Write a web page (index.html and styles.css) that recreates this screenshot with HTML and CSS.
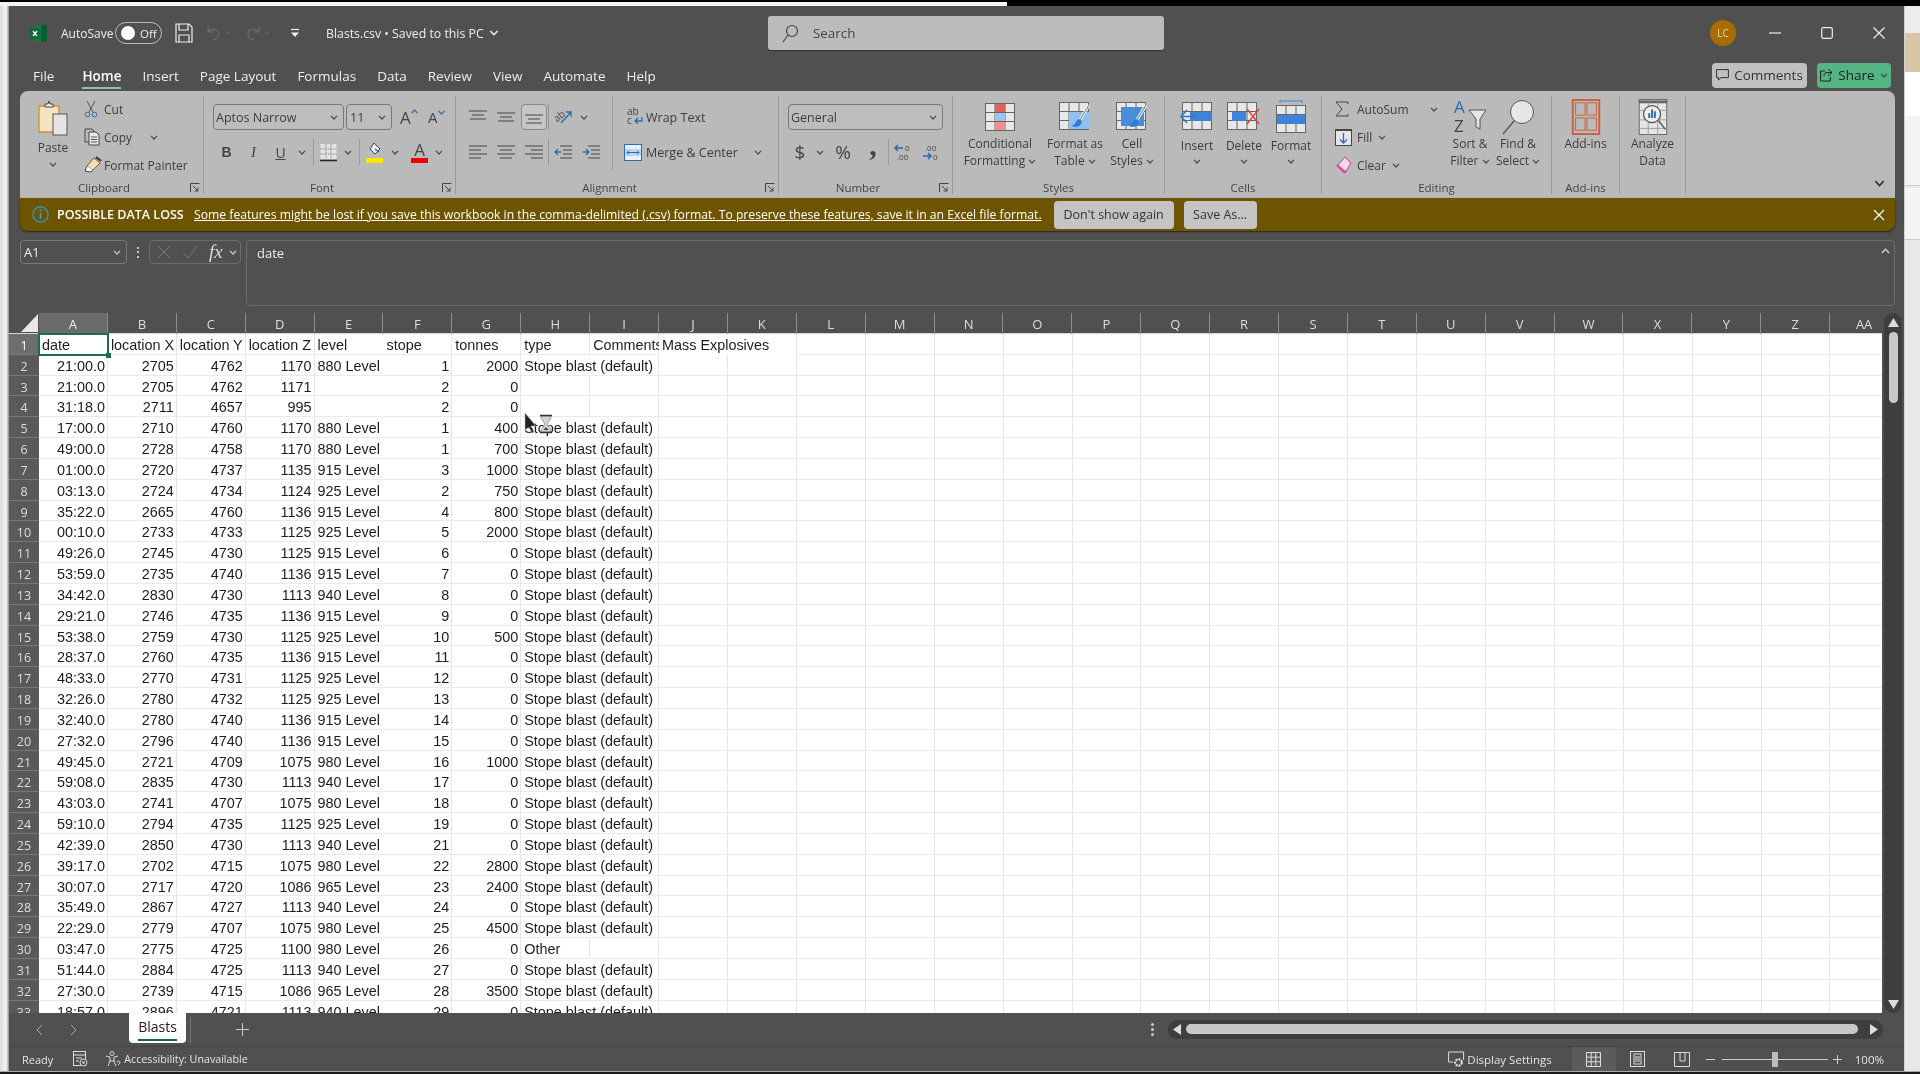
FILE: index.html
```html
<!DOCTYPE html>
<html lang="en">
<head>
<meta charset="utf-8">
<title>Blasts.csv - Excel</title>
<link rel="stylesheet" href="styles.css">
</head>
<body>
<svg class="defs" aria-hidden="true">
  <symbol id="chev" viewBox="0 0 8 5"><path d="M1 .8 4 4 7 .8" fill="none" stroke="currentColor" stroke-width="1.2"/></symbol>
  <symbol id="launch" viewBox="0 0 10 10"><path d="M.5 9V.5H9.5M3 3l5 5M8 4.500V8H4.500" fill="none" stroke="#444" stroke-width="1"/></symbol>
  <symbol id="grid" viewBox="0 0 30 28"><rect x=".5" y=".5" width="29" height="27" fill="#e8e8e8" stroke="#666"/><path d="M10 0v28M20 0v28M0 9.500h30M0 18.500h30" stroke="#666" fill="none"/></symbol>
</svg>

<div class="desktop">
  <div class="topstrip"><div class="sliver"></div></div>
  <div class="middle">
    <div class="leftstrip"></div>
    <div class="window">

      <div class="titlebar">
        <div class="tb-left">
          <svg class="xl" width="17" height="19" viewBox="0 0 17 19"><rect x="5" y="1" width="12" height="17" rx="1" fill="#107c41"/><rect x="11" y="1" width="6" height="17" fill="#0b5d31"/><rect y="4" width="10" height="11" rx="1" fill="#0d6b38"/><path d="M3 7l4 5M7 7l-4 5" stroke="#fff" stroke-width="1.300"/></svg>
          <span class="as-label">AutoSave</span>
          <span class="toggle"><span class="knob"></span><span>Off</span></span>
          <svg class="save" width="18" height="20" viewBox="0 0 18 20"><path d="M1 1h13l3 3v15H1zM4 1v6h9V1M4 19v-7h10v7" fill="none" stroke="#eee" stroke-width="1.200"/></svg>
          <svg class="undo" width="16" height="16" viewBox="0 0 16 16"><path d="M2 1v6h6M2 7c3-4 11-4 11 2 0 3-3 5-6 6" fill="none" stroke="#6d6d6d" stroke-width="1.200"/></svg>
          <svg class="chev tiny dim"><use href="#chev"/></svg>
          <svg class="redo" width="16" height="16" viewBox="0 0 16 16"><path d="M14 1v6H8M14 7c-3-4-11-4-11 2 0 3 3 5 6 6" fill="none" stroke="#6d6d6d" stroke-width="1.200"/></svg>
          <svg class="chev tiny dim"><use href="#chev"/></svg>
          <svg class="qat" width="10" height="10" viewBox="0 0 10 10"><path d="M1 1.500h8" stroke="#eee" stroke-width="1.200"/><path d="M1 4.500h8L5 9z" fill="#eee"/></svg>
          <span class="doc">Blasts.csv&nbsp;•&nbsp;Saved to this PC</span>
          <svg class="chev light"><use href="#chev"/></svg>
        </div>
        <div class="search">
          <svg width="17" height="19" viewBox="0 0 17 19"><circle cx="10" cy="7" r="5.500" fill="none" stroke="#444" stroke-width="1.200"/><path d="M6 11 1 18" stroke="#444" stroke-width="1.200"/></svg>
          <span>Search</span>
        </div>
        <div class="tb-right">
          <span class="avatar">LC</span>
          <button class="win"><svg width="12" height="12" viewBox="0 0 12 12"><path d="M0 6h12" stroke="#eee" stroke-width="1.200"/></svg></button>
          <button class="win"><svg width="12" height="12" viewBox="0 0 12 12"><rect x=".7" y=".7" width="10.600" height="10.600" rx="1.500" fill="none" stroke="#eee" stroke-width="1.200"/></svg></button>
          <button class="win"><svg width="12" height="12" viewBox="0 0 12 12"><path d="M.5.5l11 11M11.500.5l-11 11" stroke="#eee" stroke-width="1.200"/></svg></button>
        </div>
      </div>

      <div class="tabsbar">
        <span class="tab">File</span>
        <span class="tab active">Home</span>
        <span class="tab">Insert</span>
        <span class="tab">Page Layout</span>
        <span class="tab">Formulas</span>
        <span class="tab">Data</span>
        <span class="tab">Review</span>
        <span class="tab">View</span>
        <span class="tab">Automate</span>
        <span class="tab">Help</span>
        <span class="tabs-spacer"></span>
        <button class="comments"><svg width="13" height="13" viewBox="0 0 13 13"><path d="M.6.600h11.800v8H5L2.500 11V8.600H.6z" fill="none" stroke="#333"/></svg>Comments</button>
        <button class="share"><svg width="13" height="14" viewBox="0 0 13 14"><path d="M8 1l4 3.500L8 8M12 4.500H7C5 4.500 4 6 4 8M5 3H.6v10h9.800V9" fill="none" stroke="#222"/></svg>Share<svg class="chev"><use href="#chev"/></svg></button>
      </div>

      <div class="ribbon">
        <section class="group">
          <div class="body clip">
            <div class="paste">
              <svg width="30" height="36" viewBox="0 0 30 36"><path d="M1 6h20v26H1z" fill="#f3e3c0" stroke="#c8942f" stroke-width="1.300"/><path d="M7 6V4h3l1-3 1 3h3v3H7z" fill="#eee" stroke="#444"/><rect x="15" y="14" width="14" height="21" fill="#e4e4e4" stroke="#555"/></svg>
              <span class="lab">Paste</span>
              <svg class="chev"><use href="#chev"/></svg>
            </div>
            <div class="stack">
              <div class="sitem"><span class="slot"><svg width="14" height="18" viewBox="0 0 14 18"><path d="M3 1l6 11M11 1L5 12" stroke="#555" fill="none"/><circle cx="3.500" cy="14.500" r="2.300" fill="none" stroke="#2b6cb0"/><circle cx="10.500" cy="14.500" r="2.300" fill="none" stroke="#2b6cb0"/></svg></span><span>Cut</span></div>
              <div class="sitem"><span class="slot"><svg width="16" height="18" viewBox="0 0 16 18"><path d="M5 14H1V1h7l2 2v1" fill="none" stroke="#444"/><path d="M5 4h7l3 3v10H5z" fill="#e8e8e8" stroke="#444"/><path d="M7 9h6M7 11.500h6M7 14h6" stroke="#555"/></svg></span><span>Copy</span><svg class="chev gap18"><use href="#chev"/></svg></div>
              <div class="sitem"><span class="slot"><svg width="18" height="18" viewBox="0 0 18 18"><path d="M10 2l6 5-7 7-6-4z" fill="#efe2b8" stroke="#7a5a12"/><path d="M3 10 1 15l6 1 2-2" fill="#fff" stroke="#444"/><path d="M12 1l5 4" stroke="#333" stroke-width="2"/></svg></span><span>Format Painter</span></div>
            </div>
          </div>
          <div class="glabel hl">Clipboard</div>
          <svg class="launch"><use href="#launch"/></svg>
        </section>

        <section class="group">
          <div class="body rows font">
            <div class="row26">
              <div class="combo w131">Aptos Narrow<svg class="chev"><use href="#chev"/></svg></div>
              <div class="combo w46">11<svg class="chev"><use href="#chev"/></svg></div>
              <span class="big-a">A<svg class="mini" width="7" height="5" viewBox="0 0 7 5"><path d="M.5 4 3.500 1l3 3" fill="none" stroke="#2b6cb0" stroke-width="1.200"/></svg></span>
              <span class="big-a small">A<svg class="mini" width="7" height="5" viewBox="0 0 7 5"><path d="M.5 1l3 3 3-3" fill="none" stroke="#2b6cb0" stroke-width="1.200"/></svg></span>
            </div>
            <div class="row26 tight">
              <span class="ib w27 serif-b">B</span>
              <span class="ib w27 serif-i">I</span>
              <span class="ib w27 und">U</span>
              <span class="ib w16"><svg class="chev"><use href="#chev"/></svg></span>
              <span class="vsep m3"></span>
              <span class="ib w17"><svg width="17" height="19" viewBox="0 0 17 19"><rect x=".5" y="1" width="16" height="15" fill="#e3e3e3"/><path d="M6 1v15M11 1v15M.5 6h16M.5 11h16" stroke="#888" stroke-dasharray="1.500 1"/><path d="M0 17.500h17" stroke="#222" stroke-width="1.500"/></svg></span>
              <span class="ib w22"><svg class="chev"><use href="#chev"/></svg></span>
              <span class="vsep"></span>
              <span class="ib w17 m6"><svg width="17" height="21" viewBox="0 0 17 21"><path d="M8 1l6 6-5 5-5-5z" fill="#eee" stroke="#444"/><path d="M9 7l4 3" stroke="#2b6cb0" stroke-width="1.500"/><rect y="16" width="17" height="5" fill="#ffe600"/></svg></span>
              <span class="ib w24"><svg class="chev"><use href="#chev"/></svg></span>
              <span class="ib w17 color"><svg width="17" height="21" viewBox="0 0 17 21"><text x="8.500" y="14" text-anchor="middle" class="svg-a">A</text><rect y="16" width="17" height="5" fill="#f00000"/></svg></span>
              <span class="ib w22"><svg class="chev"><use href="#chev"/></svg></span>
            </div>
          </div>
          <div class="glabel hl">Font</div>
          <svg class="launch"><use href="#launch"/></svg>
        </section>

        <section class="group">
          <div class="body align">
            <div class="rows align-left">
              <div class="row26">
                <span class="ib w28"><svg width="18" height="14" viewBox="0 0 18 14"><path d="M0 1h18M3 5h12M1 9h16" stroke="#444" stroke-width="1.200"/></svg></span>
                <span class="ib w28"><svg width="18" height="14" viewBox="0 0 18 14"><path d="M0 3h18M3 7h12M1 11h16" stroke="#444" stroke-width="1.200"/></svg></span>
                <span class="ib w28 pressed"><svg width="18" height="14" viewBox="0 0 18 14"><path d="M0 5h18M3 9h12M1 13h16" stroke="#444" stroke-width="1.200"/></svg></span>
                <span class="vsep"></span>
                <span class="ib w28"><svg width="20" height="18" viewBox="0 0 20 18"><text x="1" y="12" class="svg-ab" transform="rotate(-40 6 9)">ab</text><path d="M8 15 18 4M13 4h5v5" stroke="#2b6cb0" fill="none" stroke-width="1.300"/></svg></span>
                <span class="ib w8"><svg class="chev"><use href="#chev"/></svg></span>
              </div>
              <div class="row26 tight">
                <span class="ib w28"><svg width="18" height="15" viewBox="0 0 18 15"><path d="M0 1h18M0 5h12M0 9h18M0 13h12" stroke="#444" stroke-width="1.200"/></svg></span>
                <span class="ib w28"><svg width="18" height="15" viewBox="0 0 18 15"><path d="M0 1h18M3 5h12M0 9h18M3 13h12" stroke="#444" stroke-width="1.200"/></svg></span>
                <span class="ib w28"><svg width="18" height="15" viewBox="0 0 18 15"><path d="M0 1h18M6 5h12M0 9h18M6 13h12" stroke="#444" stroke-width="1.200"/></svg></span>
                <span class="vsep"></span>
                <span class="ib w28"><svg width="18" height="15" viewBox="0 0 18 15"><path d="M6 1h12M9 5h9M9 9h9M6 13h12" stroke="#444" stroke-width="1.200"/><path d="M7 7H1M4 4 1 7l3 3" stroke="#2b6cb0" fill="none" stroke-width="1.300"/></svg></span>
                <span class="ib w28"><svg width="18" height="15" viewBox="0 0 18 15"><path d="M6 1h12M9 5h9M9 9h9M6 13h12" stroke="#444" stroke-width="1.200"/><path d="M1 7h6M4 4l3 3-3 3" stroke="#2b6cb0" fill="none" stroke-width="1.300"/></svg></span>
              </div>
            </div>
            <div class="rows align-right">
              <div class="row26"><span class="slot19"><svg width="17" height="20" viewBox="0 0 17 20"><text x="0" y="8" class="svg-ab">ab</text><text x="0" y="17" class="svg-ab">c</text><path d="M15 10v4H8M11 11l-3 3 3 3" stroke="#2b6cb0" fill="none" stroke-width="1.300"/></svg></span><span>Wrap Text</span></div>
              <div class="row26 tight"><span class="slot19 back3"><svg width="18" height="17" viewBox="0 0 18 17"><rect x=".5" y=".5" width="17" height="16" fill="#e8f1fa" stroke="#2b6cb0"/><rect x="1" y="5" width="16" height="7" fill="#bcd6ef"/><path d="M3 8.500h12M5 6.500l-2 2 2 2M13 6.500l2 2-2 2" stroke="#2b6cb0" fill="none"/></svg></span><span>Merge &amp; Center</span><svg class="chev gap17"><use href="#chev"/></svg></div>
            </div>
          </div>
          <div class="glabel hl">Alignment</div>
          <svg class="launch"><use href="#launch"/></svg>
        </section>

        <section class="group">
          <div class="body rows number">
            <div class="row26"><div class="combo w155">General<svg class="chev"><use href="#chev"/></svg></div></div>
            <div class="row26 tight">
              <span class="ib w24 sym">$</span>
              <span class="ib w16"><svg class="chev"><use href="#chev"/></svg></span>
              <span class="ib w30 sym">%</span>
              <span class="ib w30 sym comma">,</span>
              <span class="vsep"></span>
              <span class="ib w28"><svg width="19" height="18" viewBox="0 0 19 18"><path d="M9 5H1M4 2 1 5l3 3" stroke="#2168b8" fill="none" stroke-width="1.500"/><text x="11" y="8" class="svg-num">0</text><text x="3" y="17" class="svg-num">.00</text></svg></span>
              <span class="ib w28"><svg width="19" height="18" viewBox="0 0 19 18"><text x="3" y="8" class="svg-num">.00</text><path d="M1 13h8M6 10l3 3-3 3" stroke="#2168b8" fill="none" stroke-width="1.500"/><text x="11" y="17" class="svg-num">0</text></svg></span>
            </div>
          </div>
          <div class="glabel hl">Number</div>
          <svg class="launch"><use href="#launch"/></svg>
        </section>

        <section class="group">
          <div class="body bigs">
            <div class="bigb w94">
              <svg class="ico" width="30" height="28" viewBox="0 0 30 28"><use href="#grid"/><rect x="10" y="1" width="10" height="8" fill="#e0605c"/><rect x="10" y="19" width="10" height="8" fill="#ef8f8c"/><rect x="10" y="10" width="10" height="8" fill="#9cc6ee"/></svg>
              <span>Conditional</span><span>Formatting <svg class="chev"><use href="#chev"/></svg></span>
            </div>
            <div class="bigb w56">
              <svg class="ico" width="32" height="30" viewBox="0 0 32 30"><use href="#grid" width="30" height="28"/><rect x="10" y="10" width="20" height="17" fill="#8fc0ee"/><path d="M30 3 21 18" stroke="#eee" stroke-width="3"/><path d="M30 3 21 18" stroke="#777" stroke-width="1"/><path d="M20 17c-3 1-3 5-7 7 4 2 9 1 10-5z" fill="#2f7bd6"/></svg>
              <span>Format as</span><span>Table <svg class="chev"><use href="#chev"/></svg></span>
            </div>
            <div class="bigb w58">
              <svg class="ico" width="32" height="30" viewBox="0 0 32 30"><use href="#grid" width="30" height="28"/><rect x="5" y="5" width="23" height="19" fill="#4a8edb"/><path d="M30 3 21 18" stroke="#eee" stroke-width="3"/><path d="M30 3 21 18" stroke="#777" stroke-width="1"/><path d="M20 17c-3 1-3 5-7 7 4 2 9 1 10-5z" fill="#2f7bd6"/></svg>
              <span>Cell</span><span>Styles <svg class="chev"><use href="#chev"/></svg></span>
            </div>
          </div>
          <div class="glabel">Styles</div>
        </section>

        <section class="group">
          <div class="body bigs cells">
            <div class="bigb w46">
              <svg class="ico" width="34" height="30" viewBox="0 0 34 30"><use href="#grid" x="2" width="30" height="28"/><rect x="10" y="10" width="22" height="9" fill="#3f83d8"/><path d="M16 14.500H1M7 8l-6 6.500L7 21" fill="none" stroke="#2f74cc" stroke-width="1.500"/></svg>
              <span class="lab">Insert</span><svg class="chev vm"><use href="#chev"/></svg>
            </div>
            <div class="bigb w46">
              <svg class="ico" width="34" height="30" viewBox="0 0 34 30"><use href="#grid" width="30" height="28"/><rect x="5" y="10" width="14" height="9" fill="#3f83d8"/><path d="M20 7l12 15M32 7 20 22" stroke="#d8453f" stroke-width="1.500"/></svg>
              <span class="lab">Delete</span><svg class="chev vm"><use href="#chev"/></svg>
            </div>
            <div class="bigb w46">
              <svg class="ico" width="30" height="34" viewBox="0 0 30 34"><use href="#grid" y="5" width="30" height="28"/><rect x="1" y="15" width="28" height="9" fill="#3f83d8"/><path d="M4 1h22M4 0v3M26 0v3" stroke="#3f83d8"/></svg>
              <span class="lab">Format</span><svg class="chev vm"><use href="#chev"/></svg>
            </div>
          </div>
          <div class="glabel">Cells</div>
        </section>

        <section class="group">
          <div class="body edit">
            <div class="stack w125">
              <div class="sitem"><span class="slot22"><svg width="14" height="16" viewBox="0 0 14 16"><path d="M13 3V1H1l6 7-6 7h12v-2" fill="none" stroke="#444"/></svg></span><span>AutoSum</span><svg class="chev gap20"><use href="#chev"/></svg></div>
              <div class="sitem"><span class="slot22"><svg width="18" height="17" viewBox="0 0 18 17"><rect x=".5" y="1.500" width="16" height="15" fill="#e6e6e6" stroke="#444"/><path d="M0 1h17" stroke="#444" stroke-width="2"/><path d="M8.500 4v10M5 10.500l3.500 3.500 3.500-3.500" stroke="#2b6cb0" fill="none" stroke-width="1.300"/></svg></span><span>Fill</span><svg class="chev gap4"><use href="#chev"/></svg></div>
              <div class="sitem"><span class="slot22"><svg width="17" height="18" viewBox="0 0 17 18"><path d="M10 1l6 6-6 10-8-7z" fill="#f0d8e6" stroke="#c43a8a"/><path d="M1 9.500l7 7 2 1 1-2-8-7z" fill="#e0449a"/></svg></span><span>Clear</span><svg class="chev gap4"><use href="#chev"/></svg></div>
            </div>
            <div class="bigs inner">
              <div class="bigb w46">
                <svg class="ico" width="32" height="36" viewBox="0 0 32 36"><text x="0" y="14" class="svg-sort blue">A</text><text x="0" y="33" class="svg-sort">Z</text><path d="M15 11h17l-6 9v10l-4-2v-8z" fill="#e6e6e6" stroke="#555"/></svg>
                <span>Sort &amp;</span><span>Filter <svg class="chev"><use href="#chev"/></svg></span>
              </div>
              <div class="bigb w46">
                <svg class="ico" width="32" height="36" viewBox="0 0 32 36"><circle cx="20" cy="13" r="11.500" fill="#e6e6e6" stroke="#555"/><path d="M12 22 1 35" stroke="#555" stroke-width="1.300"/></svg>
                <span>Find &amp;</span><span>Select <svg class="chev"><use href="#chev"/></svg></span>
              </div>
            </div>
          </div>
          <div class="glabel">Editing</div>
        </section>

        <section class="group">
          <div class="body bigs">
            <div class="bigb wfull">
              <svg class="ico" width="30" height="38" viewBox="0 0 30 38"><rect x="1" y="1" width="28" height="36" fill="none" stroke="#c8603c" stroke-width="2"/><rect x="4" y="4" width="10" height="13" fill="none" stroke="#c8603c"/><rect x="16" y="4" width="10" height="13" fill="none" stroke="#c8603c"/><rect x="4" y="20" width="10" height="13" fill="none" stroke="#c8603c"/><rect x="16" y="20" width="10" height="13" fill="none" stroke="#c8603c"/></svg>
              <span>Add-ins</span>
            </div>
          </div>
          <div class="glabel">Add-ins</div>
        </section>

        <section class="group">
          <div class="body bigs">
            <div class="bigb wfull">
              <svg class="ico" width="30" height="38" viewBox="0 0 30 38"><rect x=".5" y=".5" width="29" height="37" fill="#e6e6e6" stroke="#666"/><path d="M0 3h30" stroke="#666" stroke-width="3"/><path d="M0 12h30M0 22h30M0 31h30M10 3v35M20 3v35" stroke="#999"/><circle cx="14" cy="16" r="9" fill="#eee" stroke="#555" stroke-width="1.300"/><path d="M10 20v-5h2v5zM13 20V11h2v9zM16 20v-7h2v7z" fill="#2b6cb0"/><path d="M21 23l7 9" stroke="#555" stroke-width="1.500"/></svg>
              <span>Analyze</span><span>Data</span>
            </div>
          </div>
        </section>

        <div class="rib-end"><svg class="chev big"><use href="#chev"/></svg></div>
      </div>

      <div class="banner">
        <svg width="17" height="17" viewBox="0 0 17 17"><circle cx="8.500" cy="8.500" r="7.700" fill="none" stroke="#2e9fd8" stroke-width="1.200"/><path d="M8.500 7v6" stroke="#2e9fd8" stroke-width="1.500"/><circle cx="8.500" cy="4.500" r="1" fill="#2e9fd8"/></svg>
        <strong>POSSIBLE DATA LOSS</strong>
        <a class="ban-link" href="#">Some features might be lost if you save this workbook in the comma-delimited (.csv) format. To preserve these features, save it in an Excel file format.</a>
        <button class="ban-btn dont">Don't show again</button>
        <button class="ban-btn saveas">Save As...</button>
        <span class="ban-spacer"></span>
        <svg class="ban-x" width="12" height="12" viewBox="0 0 12 12"><path d="M1 1l10 10M11 1 1 11" stroke="#fff" stroke-width="1.300"/></svg>
      </div>

      <div class="formula">
        <div class="namebox"><span>A1</span><svg class="chev"><use href="#chev"/></svg></div>
        <span class="fdots">⋮</span>
        <div class="fxbox">
          <svg width="14" height="14" viewBox="0 0 14 14"><path d="M1 1l12 12M13 1 1 13" stroke="#777"/></svg>
          <svg width="16" height="14" viewBox="0 0 16 14"><path d="M1 8l5 5L15 1" fill="none" stroke="#777"/></svg>
          <span class="fx">fx</span>
          <svg class="chev"><use href="#chev"/></svg>
        </div>
        <div class="fbox"><span>date</span><svg class="chev flip"><use href="#chev"/></svg></div>
      </div>

      <div class="gridarea">
        <div class="sheetwrap">
          <div class="sheet">
            <div class="hrow">
              <div class="corner"><svg width="17" height="18" viewBox="0 0 17 18"><path d="M17 0v18H0z" fill="#e8e8e8"/></svg></div>
              <div class="cols">
                <span class="sel">A</span><span>B</span><span>C</span><span>D</span><span>E</span><span>F</span><span>G</span><span>H</span><span>I</span><span>J</span><span>K</span><span>L</span><span>M</span><span>N</span><span>O</span><span>P</span><span>Q</span><span>R</span><span>S</span><span>T</span><span>U</span><span>V</span><span>W</span><span>X</span><span>Y</span><span>Z</span><span>AA</span>
              </div>
            </div>
            <div class="r"><div class="rh sel">1</div><div class="cs"><div class="c active">date</div><div class="c">location X</div><div class="c">location Y</div><div class="c">location Z</div><div class="c">level</div><div class="c">stope</div><div class="c">tonnes</div><div class="c">type</div><div class="c">Comments</div><div class="c s3">Mass Explosives</div></div></div>
            <div class="r"><div class="rh">2</div><div class="cs"><div class="c n">21:00.0</div><div class="c n">2705</div><div class="c n">4762</div><div class="c n">1170</div><div class="c">880 Level</div><div class="c n">1</div><div class="c n">2000</div><div class="c s2">Stope blast (default)</div></div></div>
            <div class="r"><div class="rh">3</div><div class="cs"><div class="c n">21:00.0</div><div class="c n">2705</div><div class="c n">4762</div><div class="c n">1171</div><div class="c"></div><div class="c n">2</div><div class="c n">0</div></div></div>
            <div class="r"><div class="rh">4</div><div class="cs"><div class="c n">31:18.0</div><div class="c n">2711</div><div class="c n">4657</div><div class="c n">995</div><div class="c"></div><div class="c n">2</div><div class="c n">0</div></div></div>
            <div class="r"><div class="rh">5</div><div class="cs"><div class="c n">17:00.0</div><div class="c n">2710</div><div class="c n">4760</div><div class="c n">1170</div><div class="c">880 Level</div><div class="c n">1</div><div class="c n">400</div><div class="c s2">Stope blast (default)</div></div></div>
            <div class="r"><div class="rh">6</div><div class="cs"><div class="c n">49:00.0</div><div class="c n">2728</div><div class="c n">4758</div><div class="c n">1170</div><div class="c">880 Level</div><div class="c n">1</div><div class="c n">700</div><div class="c s2">Stope blast (default)</div></div></div>
            <div class="r"><div class="rh">7</div><div class="cs"><div class="c n">01:00.0</div><div class="c n">2720</div><div class="c n">4737</div><div class="c n">1135</div><div class="c">915 Level</div><div class="c n">3</div><div class="c n">1000</div><div class="c s2">Stope blast (default)</div></div></div>
            <div class="r"><div class="rh">8</div><div class="cs"><div class="c n">03:13.0</div><div class="c n">2724</div><div class="c n">4734</div><div class="c n">1124</div><div class="c">925 Level</div><div class="c n">2</div><div class="c n">750</div><div class="c s2">Stope blast (default)</div></div></div>
            <div class="r"><div class="rh">9</div><div class="cs"><div class="c n">35:22.0</div><div class="c n">2665</div><div class="c n">4760</div><div class="c n">1136</div><div class="c">915 Level</div><div class="c n">4</div><div class="c n">800</div><div class="c s2">Stope blast (default)</div></div></div>
            <div class="r"><div class="rh">10</div><div class="cs"><div class="c n">00:10.0</div><div class="c n">2733</div><div class="c n">4733</div><div class="c n">1125</div><div class="c">925 Level</div><div class="c n">5</div><div class="c n">2000</div><div class="c s2">Stope blast (default)</div></div></div>
            <div class="r"><div class="rh">11</div><div class="cs"><div class="c n">49:26.0</div><div class="c n">2745</div><div class="c n">4730</div><div class="c n">1125</div><div class="c">915 Level</div><div class="c n">6</div><div class="c n">0</div><div class="c s2">Stope blast (default)</div></div></div>
            <div class="r"><div class="rh">12</div><div class="cs"><div class="c n">53:59.0</div><div class="c n">2735</div><div class="c n">4740</div><div class="c n">1136</div><div class="c">915 Level</div><div class="c n">7</div><div class="c n">0</div><div class="c s2">Stope blast (default)</div></div></div>
            <div class="r"><div class="rh">13</div><div class="cs"><div class="c n">34:42.0</div><div class="c n">2830</div><div class="c n">4730</div><div class="c n">1113</div><div class="c">940 Level</div><div class="c n">8</div><div class="c n">0</div><div class="c s2">Stope blast (default)</div></div></div>
            <div class="r"><div class="rh">14</div><div class="cs"><div class="c n">29:21.0</div><div class="c n">2746</div><div class="c n">4735</div><div class="c n">1136</div><div class="c">915 Level</div><div class="c n">9</div><div class="c n">0</div><div class="c s2">Stope blast (default)</div></div></div>
            <div class="r"><div class="rh">15</div><div class="cs"><div class="c n">53:38.0</div><div class="c n">2759</div><div class="c n">4730</div><div class="c n">1125</div><div class="c">925 Level</div><div class="c n">10</div><div class="c n">500</div><div class="c s2">Stope blast (default)</div></div></div>
            <div class="r"><div class="rh">16</div><div class="cs"><div class="c n">28:37.0</div><div class="c n">2760</div><div class="c n">4735</div><div class="c n">1136</div><div class="c">915 Level</div><div class="c n">11</div><div class="c n">0</div><div class="c s2">Stope blast (default)</div></div></div>
            <div class="r"><div class="rh">17</div><div class="cs"><div class="c n">48:33.0</div><div class="c n">2770</div><div class="c n">4731</div><div class="c n">1125</div><div class="c">925 Level</div><div class="c n">12</div><div class="c n">0</div><div class="c s2">Stope blast (default)</div></div></div>
            <div class="r"><div class="rh">18</div><div class="cs"><div class="c n">32:26.0</div><div class="c n">2780</div><div class="c n">4732</div><div class="c n">1125</div><div class="c">925 Level</div><div class="c n">13</div><div class="c n">0</div><div class="c s2">Stope blast (default)</div></div></div>
            <div class="r"><div class="rh">19</div><div class="cs"><div class="c n">32:40.0</div><div class="c n">2780</div><div class="c n">4740</div><div class="c n">1136</div><div class="c">915 Level</div><div class="c n">14</div><div class="c n">0</div><div class="c s2">Stope blast (default)</div></div></div>
            <div class="r"><div class="rh">20</div><div class="cs"><div class="c n">27:32.0</div><div class="c n">2796</div><div class="c n">4740</div><div class="c n">1136</div><div class="c">915 Level</div><div class="c n">15</div><div class="c n">0</div><div class="c s2">Stope blast (default)</div></div></div>
            <div class="r"><div class="rh">21</div><div class="cs"><div class="c n">49:45.0</div><div class="c n">2721</div><div class="c n">4709</div><div class="c n">1075</div><div class="c">980 Level</div><div class="c n">16</div><div class="c n">1000</div><div class="c s2">Stope blast (default)</div></div></div>
            <div class="r"><div class="rh">22</div><div class="cs"><div class="c n">59:08.0</div><div class="c n">2835</div><div class="c n">4730</div><div class="c n">1113</div><div class="c">940 Level</div><div class="c n">17</div><div class="c n">0</div><div class="c s2">Stope blast (default)</div></div></div>
            <div class="r"><div class="rh">23</div><div class="cs"><div class="c n">43:03.0</div><div class="c n">2741</div><div class="c n">4707</div><div class="c n">1075</div><div class="c">980 Level</div><div class="c n">18</div><div class="c n">0</div><div class="c s2">Stope blast (default)</div></div></div>
            <div class="r"><div class="rh">24</div><div class="cs"><div class="c n">59:10.0</div><div class="c n">2794</div><div class="c n">4735</div><div class="c n">1125</div><div class="c">925 Level</div><div class="c n">19</div><div class="c n">0</div><div class="c s2">Stope blast (default)</div></div></div>
            <div class="r"><div class="rh">25</div><div class="cs"><div class="c n">42:39.0</div><div class="c n">2850</div><div class="c n">4730</div><div class="c n">1113</div><div class="c">940 Level</div><div class="c n">21</div><div class="c n">0</div><div class="c s2">Stope blast (default)</div></div></div>
            <div class="r"><div class="rh">26</div><div class="cs"><div class="c n">39:17.0</div><div class="c n">2702</div><div class="c n">4715</div><div class="c n">1075</div><div class="c">980 Level</div><div class="c n">22</div><div class="c n">2800</div><div class="c s2">Stope blast (default)</div></div></div>
            <div class="r"><div class="rh">27</div><div class="cs"><div class="c n">30:07.0</div><div class="c n">2717</div><div class="c n">4720</div><div class="c n">1086</div><div class="c">965 Level</div><div class="c n">23</div><div class="c n">2400</div><div class="c s2">Stope blast (default)</div></div></div>
            <div class="r"><div class="rh">28</div><div class="cs"><div class="c n">35:49.0</div><div class="c n">2867</div><div class="c n">4727</div><div class="c n">1113</div><div class="c">940 Level</div><div class="c n">24</div><div class="c n">0</div><div class="c s2">Stope blast (default)</div></div></div>
            <div class="r"><div class="rh">29</div><div class="cs"><div class="c n">22:29.0</div><div class="c n">2779</div><div class="c n">4707</div><div class="c n">1075</div><div class="c">980 Level</div><div class="c n">25</div><div class="c n">4500</div><div class="c s2">Stope blast (default)</div></div></div>
            <div class="r"><div class="rh">30</div><div class="cs"><div class="c n">03:47.0</div><div class="c n">2775</div><div class="c n">4725</div><div class="c n">1100</div><div class="c">980 Level</div><div class="c n">26</div><div class="c n">0</div><div class="c">Other</div></div></div>
            <div class="r"><div class="rh">31</div><div class="cs"><div class="c n">51:44.0</div><div class="c n">2884</div><div class="c n">4725</div><div class="c n">1113</div><div class="c">940 Level</div><div class="c n">27</div><div class="c n">0</div><div class="c s2">Stope blast (default)</div></div></div>
            <div class="r"><div class="rh">32</div><div class="cs"><div class="c n">27:30.0</div><div class="c n">2739</div><div class="c n">4715</div><div class="c n">1086</div><div class="c">965 Level</div><div class="c n">28</div><div class="c n">3500</div><div class="c s2">Stope blast (default)</div></div></div>
            <div class="r"><div class="rh">33</div><div class="cs"><div class="c n">18:57.0</div><div class="c n">2896</div><div class="c n">4721</div><div class="c n">1113</div><div class="c">940 Level</div><div class="c n">29</div><div class="c n">0</div><div class="c s2">Stope blast (default)</div></div></div>
          </div>
        </div>
        <div class="vscroll">
          <svg width="11" height="9" viewBox="0 0 11 9"><path d="M5.500 0 11 9H0z" fill="#ddd"/></svg>
          <div class="vthumb"></div>
          <span class="flexfill"></span>
          <svg width="11" height="9" viewBox="0 0 11 9"><path d="M5.500 9 11 0H0z" fill="#ddd"/></svg>
        </div>
      </div>

      <div class="tabbar">
        <svg class="nav first" width="7" height="12" viewBox="0 0 7 12"><path d="M6 1 1 6l5 5" fill="none" stroke="#aaa"/></svg>
        <svg class="nav" width="7" height="12" viewBox="0 0 7 12"><path d="M1 1l5 5-5 5" fill="none" stroke="#aaa"/></svg>
        <div class="sheettab"><span>Blasts</span></div>
        <span class="tabsep"></span>
        <svg class="plus" width="13" height="13" viewBox="0 0 13 13"><path d="M6.500 0v13M0 6.500h13" stroke="#ccc"/></svg>
        <span class="flexfill"></span>
        <span class="dots"><i></i><i></i><i></i></span>
        <div class="hscroll">
          <svg width="8" height="11" viewBox="0 0 8 11"><path d="M0 5.500 8 0v11z" fill="#ddd"/></svg>
          <div class="hthumb"></div>
          <svg width="8" height="11" viewBox="0 0 8 11"><path d="M8 5.500 0 0v11z" fill="#ddd"/></svg>
        </div>
      </div>

      <div class="statusbar">
        <span class="ready">Ready</span>
        <svg class="st-ic1" width="15" height="16" viewBox="0 0 15 16"><rect x=".5" y=".5" width="12" height="14" fill="none" stroke="#ddd"/><path d="M0 4h13M3 7h6M3 10h3" stroke="#ddd"/><circle cx="10.500" cy="11.500" r="3.500" fill="#505050" stroke="#ddd"/><circle cx="10.500" cy="11.500" r="1.200" fill="#ddd"/></svg>
        <svg class="st-ic2" width="16" height="16" viewBox="0 0 16 16"><circle cx="7" cy="2.500" r="2" fill="none" stroke="#ddd"/><path d="M1 5l4 1v4l-2 5M13 5L9 6v4l2 5M5 10h4" fill="none" stroke="#ddd"/><path d="M12 11a1.500 1.500 0 1 1 1.500 2v1" fill="none" stroke="#ddd"/></svg>
        <span class="access">Accessibility: Unavailable</span>
        <span class="flexfill"></span>
        <svg class="st-ic3" width="17" height="17" viewBox="0 0 17 17"><path d="M5 11H.6V1h15v8" fill="none" stroke="#ddd"/><circle cx="10.500" cy="11.500" r="3.300" fill="none" stroke="#eee" stroke-width="2" stroke-dasharray="2 1"/></svg>
        <span class="dset">Display Settings</span>
        <div class="viewbtn on"><svg width="15" height="15" viewBox="0 0 15 15"><path d="M.5.500h14v14H.5zM5.200 0v15M9.800 0v15M0 5.200h15M0 9.800h15" fill="none" stroke="#ddd"/></svg></div>
        <div class="viewbtn"><svg width="15" height="16" viewBox="0 0 15 16"><rect x=".5" y=".5" width="14" height="15" fill="none" stroke="#ddd"/><rect x="4" y="3" width="7" height="10" fill="none" stroke="#ddd"/><path d="M5 6h5M5 8h5M5 10h5" stroke="#ddd"/></svg></div>
        <div class="viewbtn"><svg width="16" height="15" viewBox="0 0 16 15"><path d="M.5.500h15v14H.5zM6 0v9h5V0" fill="none" stroke="#ddd"/></svg></div>
        <svg class="zm" width="9" height="9" viewBox="0 0 9 9"><path d="M0 4.500h9" stroke="#ccc"/></svg>
        <div class="slider"><span class="sthumb"></span></div>
        <svg class="zp" width="9" height="9" viewBox="0 0 9 9"><path d="M0 4.500h9M4.500 0v9" stroke="#ccc"/></svg>
        <span class="zoomv">100%</span>
      </div>
    </div>
    <div class="rightstrip">
      <div class="rs a"></div><div class="rs b"></div><div class="rs c"></div><div class="rs d"></div><div class="rs e"></div><div class="rs f"></div>
    </div>
  </div>
  <div class="botstrip"></div>

  <div class="cursor" aria-hidden="true">
    <svg width="30" height="26" viewBox="0 0 30 26"><path d="M1 1v17l4-3 3 6 2-1-3-6h5z" fill="#222" stroke="#bbb" stroke-width=".5"/><path d="M17 4h10v2l-4 6 4 6v2H17v-2l4-6-4-6z" fill="#d4d4d4" stroke="#888" stroke-width=".8"/><path d="M19.500 18h5l-2.500-3z" fill="#444"/><path d="M16 3.500h12M16 20.500h12" stroke="#333" stroke-width="1.500"/></svg>
  </div>
</div>
</body>
</html>
```
FILE: styles.css
```css
* { box-sizing: border-box; }
html, body { margin: 0; padding: 0; width: 1920px; height: 1074px; overflow: hidden; background: #000; }
body { font-family: "Open Sans", "Noto Sans", sans-serif; font-size: 12px; color: #3d3d3d; }
.defs { position: absolute; width: 0; height: 0; }
button { font: inherit; border: 0; padding: 0; color: inherit; background: none; }
svg { display: block; flex: none; }
.flexfill { flex: 1; }

.desktop { position: relative; width: 1920px; height: 1074px; display: flex; flex-direction: column; background: #000; filter: blur(.3px); }
.topstrip { height: 6px; background: #000; padding-top: 2px; flex: none; }
.sliver { width: 1007px; height: 4px; background: #f2f2f2; }
.middle { display: flex; flex: 1; min-height: 0; }
.leftstrip { width: 9px; flex: none; background: linear-gradient(90deg, #dcdcdc, #f4f4f4 70%, #8a8a8a); }
.window { width: 1895px; flex: none; display: flex; flex-direction: column; background: #505050; }
.rightstrip { flex: 1; display: flex; flex-direction: column; background: #ececec; border-left: 1px solid #d0d0d0; }
.rs.a { height: 27px; background: #ececec; }
.rs.b { height: 39px; background: #d8c7a6; }
.rs.c { height: 44px; background: #fff; }
.rs.d { height: 70px; background: #f4f4f4; border-bottom: 1px solid #ccc; margin-bottom: 2px; }
.rs.e { height: 52px; background: #f4f4f4; border-bottom: 1px solid #ccc; }
.rs.f { flex: 1; background: #e8e8e8; }
.botstrip { height: 3px; background: #1a1a1a; border-top: 1px solid #aaa; flex: none; }

.titlebar { height: 54px; flex: none; display: grid; grid-template-columns: 759px 396px 1fr; align-items: center; color: #eee; }
.tb-left { display: flex; align-items: center; padding-left: 21px; height: 100%; font-size: 12px; }
.as-label { margin-left: 14px; width: 54px; }
.toggle { width: 47px; height: 22px; border: 1px solid #bbb; border-radius: 11px; display: flex; align-items: center; gap: 5px; padding-left: 5px; font-size: 11.5px; }
.knob { width: 14px; height: 14px; border-radius: 50%; background: #fff; }
.save { margin-left: 13px; }
.undo { margin-left: 13px; }
.redo { margin-left: 14px; }
.chev { width: 8px; height: 5px; color: #4a4a4a; display: inline-block; vertical-align: middle; }
.chev.tiny { margin-left: 3px; width: 6px; height: 4px; }
.chev.dim { color: #6d6d6d; }
.chev.light { color: #eee; margin-left: 5px; width: 10px; height: 6px; }
.qat { margin-left: 20px; }
.doc { margin-left: 26px; font-size: 12.3px; white-space: nowrap; }
.search { height: 34px; background: #bcbcbc; border-radius: 3px; display: flex; align-items: center; padding-left: 14px; gap: 14px; color: #444; font-size: 13.4px; box-shadow: 0 1px 1px #333; }
.tb-right { display: flex; align-items: center; }
.avatar { margin-left: 546px; width: 26px; height: 26px; border-radius: 50%; background: #a86d00; display: flex; align-items: center; justify-content: center; color: #e9d7a8; font-size: 10px; }
.win { width: 52px; height: 30px; display: flex; align-items: center; justify-content: center; }
.win:first-of-type { margin-left: 13px; }

.tabsbar { height: 31px; flex: none; display: flex; align-items: center; padding-left: 24px; gap: 21px; color: #eee; font-size: 13.5px; }
.tab { white-space: nowrap; line-height: 26px; }
.tab.active { margin-left: 7px; color: #fff; font-weight: 600; box-shadow: inset 0 -2px 0 #8fc1b5; }
.tabs-spacer { flex: 1; }
.comments, .share { height: 25px; border-radius: 4px; display: flex; align-items: center; justify-content: center; gap: 5px; font-size: 13.5px; margin-bottom: 1px; }
.comments { width: 95px; background: #c0c0c0; color: #333; margin-right: -11px; }
.share { width: 74px; background: #54b583; color: #222; margin-right: 13px; }

.ribbon { height: 107px; flex: none; margin: 0 9px 0 11px; background: #bababa; border-radius: 8px 8px 0 0; display: grid; grid-template-columns: 184px 252px 323px 174px 212px 157px 230px 68px 66px 1fr; padding-top: 5px; }
.group { position: relative; display: flex; flex-direction: column; height: 98px; border-right: 1px solid #9a9a9a; }
.body { height: 85px; flex: none; }
.glabel { height: 14px; line-height: 14px; font-size: 11.5px; text-align: center; color: #444; }
.glabel.hl { padding-right: 15px; }
.launch { position: absolute; right: 3px; bottom: 1px; width: 10px; height: 10px; }
.rib-end { display: flex; align-items: flex-end; justify-content: flex-end; padding: 0 10px 11px 0; }
.chev.big { width: 11px; height: 7px; color: #333; }

.clip { display: flex; }
.paste { width: 62px; margin-left: 2px; display: flex; flex-direction: column; align-items: center; padding-top: 4px; }
.paste .lab { margin-top: 4px; line-height: 16px; }
.paste .chev { margin-top: 6px; }
.stack { display: flex; flex-direction: column; margin-top: -1px; }
.stack.w125 { width: 125px; padding-left: 13px; }
.sitem { height: 28px; display: flex; align-items: center; white-space: nowrap; }
.slot { width: 20px; flex: none; }
.slot22 { width: 22px; flex: none; }
.gap18 { margin-left: 18px; }
.gap20 { margin-left: 21px; }
.gap17 { margin-left: 16px; }
.gap4 { margin-left: 6px; }

.rows { display: flex; flex-direction: column; padding-top: 8px; gap: 9px; }
.font { padding-left: 9px; }
.row26 { height: 26px; display: flex; align-items: center; white-space: nowrap; }
.font .row26.tight { margin-left: 0; }
.combo { height: 26px; border: 1px solid #777; border-radius: 4px; display: flex; align-items: center; justify-content: space-between; padding: 0 5px 0 2px; font-size: 12.5px; background: #bdbdbd; }
.w131 { width: 131px; }
.w46 { width: 46px; }
.w155 { width: 155px; }
.combo.w46 { margin-left: 2px; padding-left: 3px; }
.big-a { font-size: 17px; width: 34px; padding-left: 8px; display: flex; color: #444; }
.big-a.small { font-size: 15px; width: 28px; padding-left: 2px; }
.big-a .mini { margin-top: 3px; }
.ib { height: 26px; display: flex; align-items: center; justify-content: center; flex: none; color: #444; }
.w8 { width: 8px; margin-left: 3px; }
.w16 { width: 16px; }
.w17 { width: 17px; }
.w22 { width: 22px; }
.w24 { width: 24px; }
.w26 { width: 26px; }
.w27 { width: 27px; }
.w28 { width: 28px; }
.w30 { width: 30px; }
.m6 { margin-left: 6px; }
.m3 { margin-left: 3px; margin-right: 6px; }
.color { margin-left: 4px; }
.serif-b { font-family: "Liberation Sans", sans-serif; font-weight: 700; font-size: 14px; }
.serif-i { font-family: "Liberation Serif", serif; font-style: italic; font-size: 15px; }
.und { text-decoration: underline; font-size: 14px; }
.vsep { width: 1px; height: 26px; background: #999; flex: none; }
.pressed { border: 1px solid #8a8a8a; border-radius: 4px; background: #c6c6c6; width: 26px; margin: 0 1px; }
.svg-a { font: 17px "Open Sans", sans-serif; fill: #444; }
.svg-ab { font: 10px "Open Sans", sans-serif; fill: #444; }
.svg-num { font: 8px "Open Sans", sans-serif; fill: #444; }
.svg-sort { font: 17px "Open Sans", sans-serif; fill: #444; }
.svg-sort.blue { fill: #2b6cb0; }

.align { display: flex; }
.align-left { width: 157px; padding-left: 8px; border-right: 1px solid #9a9a9a; height: 74px; flex: none; }
.align-right { padding-left: 14px; font-size: 12.5px; }
.slot19 { width: 19px; flex: none; }
.back3 { margin-left: -3px; width: 22px; }
.number { padding-left: 9px; }
.sym { font-size: 19px; color: #444; }
.comma { font-family: "Liberation Serif", serif; font-weight: 700; font-size: 30px; padding-bottom: 14px; }

.bigs { display: flex; padding-top: 3px; }
.inner { padding-top: 3px; gap: 2px; }
.cells { padding-left: 9px; gap: 1px; }
.bigb { display: flex; flex-direction: column; align-items: center; line-height: 17px; white-space: nowrap; text-align: center; }
.bigb .ico { height: 36px; }
.bigb .lab { margin-top: 2px; }
.bigb .vm { margin-top: 5px; }
.w94 { width: 94px; }
.w56 { width: 56px; }
.w58 { width: 58px; }
.wfull { width: 100%; }
.edit { display: flex; }

.banner { height: 33px; flex: none; margin: 0 9px 0 11px; background: #6f5400; border-radius: 0 0 8px 8px; display: flex; align-items: center; padding-left: 12px; color: #fff; font-size: 12.5px; box-shadow: 0 1px 2px #222; white-space: nowrap; }
.banner strong { margin-left: 8px; font-weight: 600; width: 137px; flex: none; }
.ban-link { color: #fff; font-size: 12.2px; }
.ban-btn { height: 28px; background: #c4c4c4; border-radius: 4px; color: #333; font-size: 12.5px; flex: none; }
.dont { width: 120px; margin-left: 12px; }
.saveas { width: 73px; margin-left: 10px; }
.ban-spacer { flex: 1; }
.ban-x { margin-right: 10px; }

.formula { height: 82px; flex: none; padding: 9px 9px 7px 11px; display: flex; align-items: flex-start; color: #eee; }
.namebox { width: 107px; height: 24px; border: 1px solid #7a7a7a; border-radius: 4px; display: flex; align-items: center; justify-content: space-between; padding: 0 5px 0 3px; font-size: 13px; }
.namebox .chev, .fxbox .chev, .fbox .chev { color: #ccc; }
.fdots { width: 22px; text-align: center; line-height: 24px; font-size: 14px; }
.fxbox { width: 92px; height: 24px; border: 1px solid #6d6d6d; border-radius: 4px; display: flex; align-items: center; padding-left: 7px; gap: 11px; }
.fx { font-family: "Liberation Serif", serif; font-style: italic; font-size: 19px; color: #ddd; }
.fxbox .chev { margin-left: -5px; }
.fbox { flex: 1; margin-left: 5px; height: 66px; border: 1px solid #6d6d6d; border-radius: 4px; display: flex; justify-content: space-between; padding: 3px 3px 0 10px; font-size: 13px; }
.fbox .flip { transform: scaleY(-1); margin-top: 4px; width: 11px; height: 6px; }

.gridarea { height: 700px; flex: none; display: flex; }
.sheetwrap { width: 1873px; flex: none; overflow: hidden; }
.sheet { width: 1873px; font-family: "Liberation Sans", Arial, sans-serif; font-size: 14.4px; color: #1c1c1c; }
.hrow { height: 21px; display: flex; background: #505050; }
.corner { width: 30px; flex: none; display: flex; justify-content: flex-end; align-items: center; padding-right: 1px; border-bottom: 1px solid #d8d8d8; }
.cols { display: grid; grid-template-columns: repeat(27, 68.9px); flex: none; border-bottom: 1px solid #d8d8d8; font-family: "Open Sans", sans-serif; font-size: 13px; color: #ddd; }
.cols span { text-align: center; line-height: 22px; border-right: 1px solid #8c8c8c; }
.cols .sel { background: #6a6a6a; color: #eee; }
.r { height: 20.83px; display: flex; }
.rh { width: 30px; flex: none; background: #5a5a5a; color: #ddd; font-family: "Open Sans", sans-serif; font-size: 12.5px; text-align: center; line-height: 23px; border-bottom: 1px solid #787878; overflow: hidden; }
.rh.sel { background: #6e6e6e; color: #fff; }
.cs { display: grid; grid-template-columns: repeat(27, 68.9px); flex: none; background-color: #fff; background-image: repeating-linear-gradient(90deg, transparent 0 67.9px, #e6e6e6 67.9px 68.9px); border-bottom: 1px solid #eaeaea; }
.c { padding: 2px 3px 0; line-height: 18.8px; white-space: nowrap; overflow: hidden; min-width: 0; }
.c.n { text-align: right; }
.c.s2, .c.s3 { grid-column: span 2; background: linear-gradient(#fff, #fff) no-repeat 0 0 / 136.8px 100%; }
.c.active { position: relative; outline: 2px solid #1f6b4a; outline-offset: -1px; overflow: visible; }
.c.active::after { content: ""; position: absolute; right: -3px; bottom: -3px; width: 5px; height: 5px; background: #1f6b4a; }

.vscroll { flex: 1; margin: 0 2px; background: #3e3e3e; border-radius: 9px; display: flex; flex-direction: column; align-items: center; padding: 5px 0 4px; }
.vthumb { width: 9px; height: 71px; background: #c8c8c8; border-radius: 5px; margin-top: 5px; }

.tabbar { height: 34px; flex: none; display: flex; align-items: center; border-bottom: 1px solid #444; }
.nav.first { margin-left: 27px; }
.nav { margin-right: 27px; }
.sheettab { width: 57px; height: 30px; margin-left: 25px; background: #fff; border-radius: 0 0 4px 4px; display: flex; justify-content: center; color: #222; font-size: 14px; font-weight: 500; align-self: flex-start; }
.sheettab span { padding-top: 3px; line-height: 21px; height: 28px; border-bottom: 2px solid #0c6b43; }
.tabsep { width: 1px; height: 26px; background: #777; margin-left: 4px; }
.plus { margin-left: 45px; }
.dots { display: flex; flex-direction: column; gap: 2px; margin-right: 14px; }
.dots i { width: 3px; height: 3px; background: #ccc; border-radius: 50%; }
.hscroll { width: 715px; height: 19px; background: #3e3e3e; border-radius: 9px; display: flex; align-items: center; padding: 0 5px; margin-right: 21px; margin-top: -1px; }
.hthumb { flex: 1; height: 10px; background: #c8c8c8; border-radius: 5px; margin: 0 12px 0 5px; }

.statusbar { height: 24px; flex: none; display: flex; align-items: center; color: #e4e4e4; font-size: 11.5px; padding-left: 13px; }
.ready { font-size: 11px; }
.st-ic1 { margin-left: 20px; }
.st-ic2 { margin-left: 17px; }
.access { margin-left: 3px; white-space: nowrap; font-size: 10.7px; }
.dset { margin-left: 2px; margin-right: 20px; white-space: nowrap; }
.viewbtn { width: 44px; height: 24px; display: flex; align-items: center; justify-content: center; }
.viewbtn.on { background: #5b5b5b; }
.zm { margin-left: 2px; }
.slider { position: relative; width: 106px; height: 1px; background: #ccc; margin-left: 7px; }
.sthumb { position: absolute; left: 50px; top: -7px; width: 6px; height: 15px; background: #bdbdbd; }
.zp { margin-left: 5px; }
.zoomv { margin-left: 13px; margin-right: 20px; white-space: nowrap; }

.cursor { position: absolute; left: 524px; top: 412px; }
```
